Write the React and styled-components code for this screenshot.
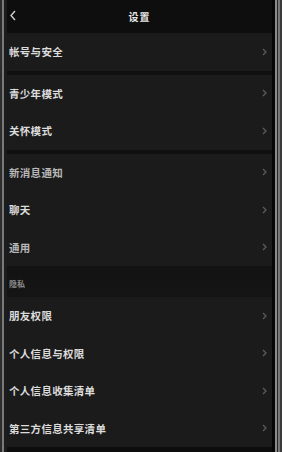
import React from "react";
import styled, { createGlobalStyle } from "styled-components";

const GlobalStyle = createGlobalStyle`
  html, body {
    margin: 0;
    padding: 0;
    background: #4a2e5c;
  }
  body {
    font-family: "Noto Sans CJK SC", "Noto Sans", sans-serif;
  }
`;

const Device = styled.div`
  display: flex;
  width: 282px;
  height: 452px;
  overflow: hidden;
  background: linear-gradient(180deg, #4b2d5e 0%, #3e2a66 100%);
`;

const LeftBezel = styled.div`
  width: 7px;
  flex-shrink: 0;
  background: linear-gradient(90deg, #2c2c2c 0 2px, #7a7a7a 2px 4px, #1c1c1c 4px 7px);
`;

const RightBezel = styled.div`
  width: 10px;
  flex-shrink: 0;
  background: linear-gradient(90deg, #060606 0 3px, #8a8a8a 3px 5px, #2a2a2a 5px 6px, #777 6px 8px, #3a3a3a 8px 10px);
`;

const Screen = styled.div`
  flex: 1;
  display: flex;
  flex-direction: column;
  background: #101010;
  min-width: 0;
`;

const Header = styled.div`
  height: 33px;
  flex-shrink: 0;
  display: flex;
  align-items: center;
  justify-content: center;
  position: relative;
  background: #0e0e0e;
`;

const BackIcon = styled.svg`
  position: absolute;
  left: 3px;
  top: 10px;
`;

const Title = styled.div`
  color: #e8e8e8;
  font-size: 10px;
  font-weight: 700;
  letter-spacing: 1px;
`;

const Group = styled.div`
  display: flex;
  flex-direction: column;
  background: #1b1b1b;
  margin-bottom: ${(p) => p.$gap || 0}px;
`;

const Row = styled.div`
  height: 37.5px;
  display: flex;
  align-items: center;
  justify-content: space-between;
  padding: 0 5px 0 2px;
`;

const Label = styled.span`
  color: ${(p) => (p.$dim ? "#b8b8b8" : "#dcdcdc")};
  font-size: 10.5px;
  font-weight: 700;
  letter-spacing: 0.3px;
`;

const SectionHead = styled.div`
  height: 31px;
  display: flex;
  align-items: flex-end;
  padding: 0 0 8px 2px;
  box-sizing: border-box;
  background: linear-gradient(180deg, #121212 0%, #151515 100%);
  color: #8a8a8a;
  font-size: 8px;
  font-weight: 700;
`;

const Footer = styled.div`
  flex: 1;
  background: #0d0d0d;
`;

const Chevron = () => (
  <svg width="5" height="8" viewBox="0 0 5 8">
    <path d="M1 1 L4 4 L1 7" fill="none" stroke="#5c5c5c" strokeWidth="1.3" />
  </svg>
);

const Item = ({ label, dim }) => (
  <Row>
    <Label $dim={dim}>{label}</Label>
    <Chevron />
  </Row>
);

export default function App() {
  return (
    <>
      <GlobalStyle />
      <Device>
        <LeftBezel />
        <Screen>
          <Header>
            <BackIcon width="6" height="11" viewBox="0 0 6 11">
              <path d="M5 1 L1 5.5 L5 10" fill="none" stroke="#d0d0d0" strokeWidth="1.4" />
            </BackIcon>
            <Title>设置</Title>
          </Header>
          <Group $gap={4}>
            <Item label="帐号与安全" />
          </Group>
          <Group $gap={4}>
            <Item label="青少年模式" />
            <Item label="关怀模式" />
          </Group>
          <Group>
            <Item label="新消息通知" dim />
            <Item label="聊天" />
            <Item label="通用" dim />
          </Group>
          <SectionHead>隐私</SectionHead>
          <Group>
            <Item label="朋友权限" />
            <Item label="个人信息与权限" />
            <Item label="个人信息收集清单" />
            <Item label="第三方信息共享清单" />
          </Group>
          <Footer />
        </Screen>
        <RightBezel />
      </Device>
    </>
  );
}
